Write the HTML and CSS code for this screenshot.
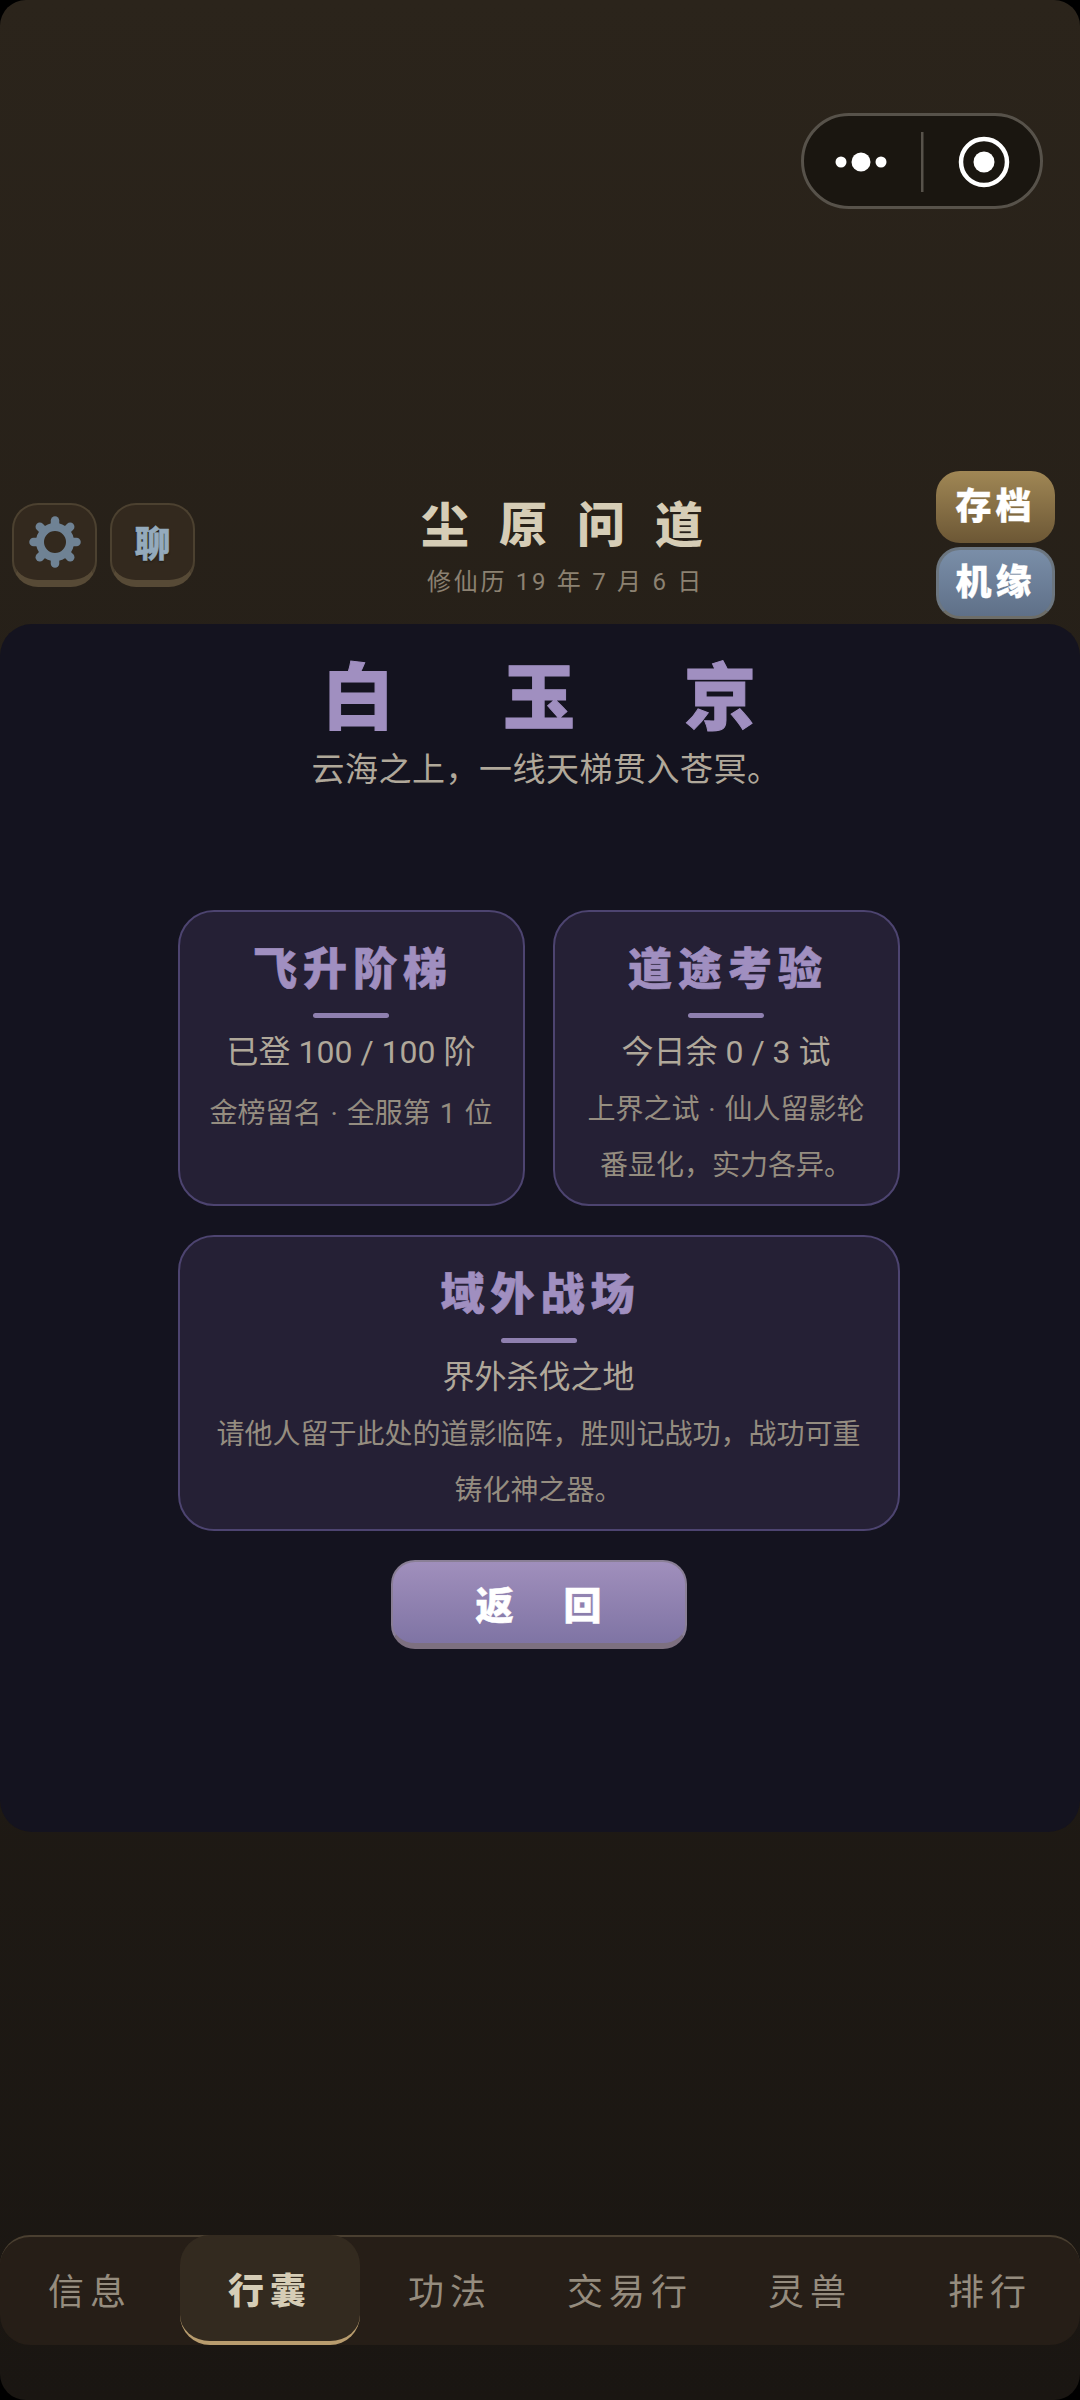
FILE: index.html
```html
<!DOCTYPE html>
<html lang="zh-CN">
<head>
    <meta charset="UTF-8">
    <meta name="viewport" content="width=device-width, initial-scale=1.0">
    <title>尘原问道</title>
    <link rel="stylesheet" href="styles.css">
</head>
<body>

<div class="screen">

    <!-- Cápsula do miniprograma -->
    <div class="capsule-row">
        <div class="capsule">
            <svg class="capsule-icon" width="236" height="90" viewBox="0 0 236 90">
                <circle cx="37" cy="46" r="5.5" fill="#fff"/>
                <circle cx="57" cy="46" r="9.5" fill="#fff"/>
                <circle cx="77" cy="46" r="5.5" fill="#fff"/>
                <rect x="117" y="16" width="2.5" height="60" fill="#57524a"/>
                <circle cx="180" cy="46" r="23" fill="none" stroke="#fff" stroke-width="4.5"/>
                <circle cx="180" cy="46" r="10.5" fill="#fff"/>
            </svg>
        </div>
    </div>

    <header class="top-bar">
        <div class="tool-group">
            <button class="tool-btn">
                <svg width="54" height="54" viewBox="-27 -27 54 54">
                    <circle r="15" fill="none" stroke="#6f8294" stroke-width="8"/>
                    <g stroke="#6f8294" stroke-width="8.5" stroke-linecap="round">
                        <line x1="0" y1="-18" x2="0" y2="-21.5"/>
                        <line x1="0" y1="-18" x2="0" y2="-21.5" transform="rotate(45)"/>
                        <line x1="0" y1="-18" x2="0" y2="-21.5" transform="rotate(90)"/>
                        <line x1="0" y1="-18" x2="0" y2="-21.5" transform="rotate(135)"/>
                        <line x1="0" y1="-18" x2="0" y2="-21.5" transform="rotate(180)"/>
                        <line x1="0" y1="-18" x2="0" y2="-21.5" transform="rotate(225)"/>
                        <line x1="0" y1="-18" x2="0" y2="-21.5" transform="rotate(270)"/>
                        <line x1="0" y1="-18" x2="0" y2="-21.5" transform="rotate(315)"/>
                    </g>
                </svg>
            </button>
            <button class="tool-btn tool-chat">聊</button>
        </div>

        <div class="game-title">
            <h1>尘原问道</h1>
            <p>修仙历 19 年 7 月 6 日</p>
        </div>

        <div class="side-group">
            <button class="side-btn side-save">存档</button>
            <button class="side-btn side-luck">机缘</button>
        </div>
    </header>

    <main class="panel">
        <h2 class="place-name">白玉京</h2>
        <p class="place-desc">云海之上，一线天梯贯入苍冥。</p>

        <div class="card-grid">
            <div class="card">
                <h3>飞升阶梯</h3>
                <div class="card-line"></div>
                <p class="card-main">已登 100 / 100 阶</p>
                <p class="card-sub card-sub-first">金榜留名 · 全服第 1 位</p>
            </div>
            <div class="card">
                <h3>道途考验</h3>
                <div class="card-line"></div>
                <p class="card-main">今日余 0 / 3 试</p>
                <p class="card-sub">上界之试 · 仙人留影轮番显化，实力各异。</p>
            </div>
            <div class="card card-wide">
                <h3>域外战场</h3>
                <div class="card-line"></div>
                <p class="card-main">界外杀伐之地</p>
                <p class="card-sub">请他人留于此处的道影临阵，胜则记战功，战功可重铸化神之器。</p>
            </div>
        </div>

        <button class="back-btn">返回</button>
    </main>

    <nav class="tabs">
        <div class="tab">信息</div>
        <div class="tab tab-active">行囊</div>
        <div class="tab">功法</div>
        <div class="tab">交易行</div>
        <div class="tab">灵兽</div>
        <div class="tab">排行</div>
    </nav>

</div>

</body>
</html>
```

FILE: styles.css
```css
/* Base */
* {
    box-sizing: border-box;
}

body {
    margin: 0;
    padding: 0;
    background-color: #000;
    font-family: Roboto, "Noto Sans CJK SC", sans-serif;
}

h1, h2, h3, p {
    margin: 0;
}

button {
    font-family: inherit;
    padding: 0;
    cursor: pointer;
}

.screen {
    height: 2400px;
    display: flex;
    flex-direction: column;
    overflow: hidden;
    padding-bottom: 55px;
    border-radius: 26px;
    background: linear-gradient(180deg, #2b241b 0%, #1a1612 100%);
}

/* Capsule */
.capsule-row {
    display: flex;
    justify-content: flex-end;
    padding: 113px 37px 0 0;
}

.capsule {
    width: 242px;
    height: 96px;
    border: 3px solid #57524a;
    border-radius: 48px;
    background-color: #1a1610;
}

.capsule-icon {
    display: block;
}

/* Top bar */
.top-bar {
    display: flex;
    align-items: flex-start;
    margin-top: 262px;
    height: 153px;
    padding: 0 25px 0 12px;
}

.tool-group {
    display: flex;
    gap: 13px;
    margin-top: 32px;
}

.tool-btn {
    width: 85px;
    height: 84px;
    display: flex;
    align-items: center;
    justify-content: center;
    padding-bottom: 2px;
    border: 2px solid #4c4130;
    border-bottom-width: 7px;
    border-bottom-color: #574a36;
    border-radius: 26px;
    background-color: #33291e;
}

.tool-chat {
    padding-bottom: 4px;
    color: #94aabc;
    font-size: 36px;
    font-weight: 900;
    -webkit-text-stroke: 0.5px #94aabc;
    text-shadow: 0 1px 2px #1a1610;
}

.game-title {
    flex: 1;
    text-align: center;
    padding-top: 25px;
}

.game-title h1 {
    color: #d6cdb6;
    font-size: 48px;
    line-height: 60px;
    font-weight: 900;
    letter-spacing: 30px;
    text-indent: 23px;
}

.game-title p {
    margin-top: 10px;
    color: #8c8272;
    font-size: 24px;
    line-height: 32px;
    letter-spacing: 2.7px;
}

.side-group {
    display: flex;
    flex-direction: column;
    gap: 4px;
}

.side-btn {
    width: 119px;
    height: 72px;
    border: none;
    border-radius: 24px;
    color: #fff;
    font-size: 36px;
    font-weight: 900;
    letter-spacing: 4px;
    line-height: 1;
    -webkit-text-stroke: 0.3px #fff;
}

.side-save {
    background: linear-gradient(180deg, #a08755 0%, #6c5735 100%);
}

.side-luck {
    border: 3px solid #6c7680;
    border-bottom-color: #6d6d68;
    background: linear-gradient(180deg, #7a8ea8 0%, #5f7088 100%);
}

/* Panel */
.panel {
    height: 1208px;
    display: flex;
    flex-direction: column;
    align-items: center;
    padding-top: 30px;
    border-radius: 32px;
    background-color: #14131f;
}

.place-name {
    color: #a08fc0;
    font-size: 72px;
    line-height: 90px;
    font-weight: 900;
    letter-spacing: 109px;
    text-indent: 107px;
    -webkit-text-stroke: 1px #a08fc0;
}

.place-desc {
    margin-top: 4px;
    padding-left: 12px;
    color: #b0a89a;
    font-size: 33px;
    line-height: 44px;
    letter-spacing: 0.5px;
}

.card-grid {
    width: 722px;
    margin-top: 118px;
    margin-left: -3px;
    display: grid;
    grid-template-columns: 347px 347px;
    column-gap: 28px;
    row-gap: 29px;
}

.card {
    height: 296px;
    padding: 30px 28px 0;
    text-align: center;
    border: 2px solid #4d4470;
    border-radius: 36px;
    background-color: #252035;
}

.card-wide {
    grid-column: 1 / 3;
}

.card h3 {
    color: #a08fc0;
    font-size: 44px;
    line-height: 56px;
    font-weight: 900;
    letter-spacing: 6px;
    text-indent: 4px;
    -webkit-text-stroke: 0.6px #a08fc0;
}

.card-line {
    width: 76px;
    height: 5px;
    margin: 15px auto 0;
    border-radius: 3px;
    background-color: #8f80b0;
}

.card-main {
    margin-top: 13px;
    color: #b0a89a;
    font-size: 32px;
    line-height: 42px;
}

.card-sub {
    margin-top: 9px;
    color: #958d80;
    font-size: 28px;
    line-height: 56px;
    word-spacing: 2px;
}

.card-sub-first {
    margin-top: 13px;
}

.back-btn {
    width: 296px;
    height: 89px;
    margin-top: 29px;
    margin-left: -3px;
    border: 2px solid #8a7f96;
    border-bottom-width: 6px;
    border-bottom-color: #7d7080;
    border-radius: 24px;
    background: linear-gradient(180deg, #a08fbc 0%, #7f74a4 100%);
    color: #fff;
    font-size: 38px;
    font-weight: 900;
    letter-spacing: 50px;
    text-indent: 50px;
    -webkit-text-stroke: 0.5px #fff;
}

/* Tabs */
.tabs {
    display: flex;
    height: 110px;
    margin-top: auto;
    border-top: 2px solid #4a3f30;
    border-radius: 30px;
    background-color: #261e17;
}

.tab {
    flex: 1;
    display: flex;
    align-items: center;
    justify-content: center;
    padding-bottom: 4px;
    color: #958c7e;
    font-size: 36px;
    letter-spacing: 6px;
}

.tab-active {
    margin-top: -2px;
    padding-bottom: 0;
    border-bottom: 4px solid #b89c6e;
    border-radius: 30px;
    background-color: #332a1f;
    color: #d6cdb6;
    font-weight: 900;
}
```
